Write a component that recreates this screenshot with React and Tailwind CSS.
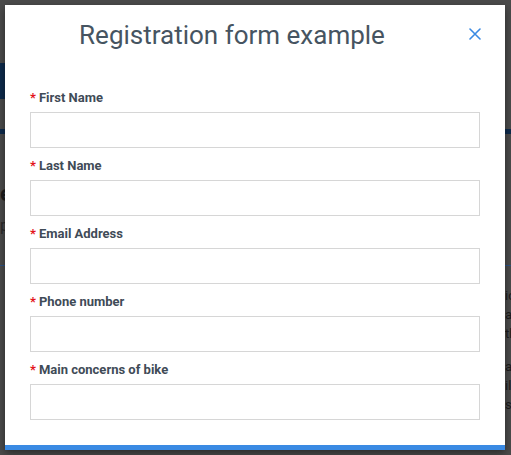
import { useState } from 'react';

const fields = [
  'First Name',
  'Last Name',
  'Email Address',
  'Phone number',
  'Main concerns of bike',
];

function Field({ label }) {
  const [value, setValue] = useState('');
  return (
    <div className="mb-[9px]">
      <label className="flex h-4 items-center pt-px text-[13px] font-bold leading-4 text-[#3f4b57]">
        <span className="mr-[3px] text-[13px] text-[#e3141b]">*</span>
        {label}
      </label>
      <input
        value={value}
        onChange={(e) => setValue(e.target.value)}
        className="mt-[7px] block h-9 w-full border border-[#d6d6d6] bg-white px-2 text-sm outline-none"
      />
    </div>
  );
}

export default function App() {
  return (
    <div className="relative h-[455px] w-[511px] overflow-hidden bg-[#4b4b4b] font-['Roboto',sans-serif]">
      {/* page behind the overlay */}
      <div className="pt-[63px]">
        <div className="h-9 w-10 bg-[#0e2b4c]" />
        <div className="mt-[30px] h-[5px] w-full bg-[#0e2b4c]" />
        <div className="mt-[48px] text-[22px] font-bold leading-6 text-[#1c1c1c]">e</div>
        <div className="mt-[10px] text-[16px] leading-5 text-[#2a2a2a]">p</div>
        <div className="mt-[29px] h-px w-full bg-[#2c5286]" />
        <div className="ml-[505px] mt-[22px] space-y-[3px] text-[13px] leading-4 text-[#1c1c1c]">
          <div>ic</div>
          <div>a</div>
          <div>th</div>
          <div className="pt-[14px]">a</div>
          <div>il</div>
          <div>se</div>
        </div>
      </div>

      {/* modal */}
      <div className="absolute left-[5px] top-[5px] h-[445px] w-[500px] border-b-[5px] border-[#3a8ae3] bg-white shadow-[0_3px_8px_rgba(0,0,0,0.45)]">
        <div className="flex items-start pl-[6px] pr-[8px] pt-[14px]">
          <h2 className="flex-1 text-center text-[26px] font-normal leading-8 text-[#465461]">
            Registration form example
          </h2>
          <button className="flex w-[44px] justify-center pt-[9px]" aria-label="Close">
            <svg width="12" height="12" viewBox="0 0 12 12" fill="none" stroke="#3a8ae3" strokeWidth="1.6" strokeLinecap="round">
              <path d="M1 1 L11 11 M11 1 L1 11" />
            </svg>
          </button>
        </div>
        <form className="px-[25px] pt-[38px]">
          {fields.map((f) => (
            <Field key={f} label={f} />
          ))}
        </form>
      </div>
    </div>
  );
}
